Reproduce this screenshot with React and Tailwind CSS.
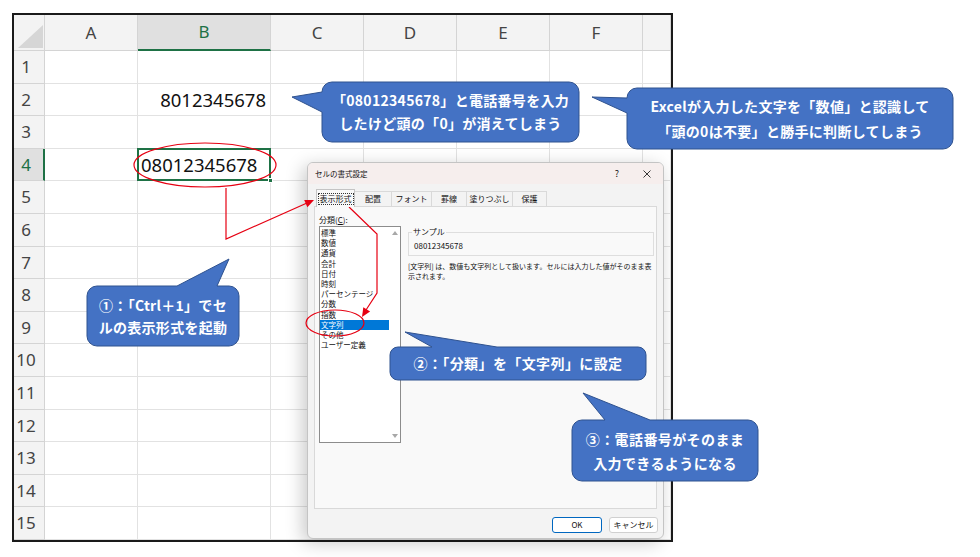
import React from "react";

const columns = ["A", "B", "C", "D", "E", "F", ""];
const rows = Array.from({ length: 15 }, (_, i) => i + 1);

const categories = [
  "標準",
  "数値",
  "通貨",
  "会計",
  "日付",
  "時刻",
  "パーセンテージ",
  "分数",
  "指数",
  "文字列",
  "その他",
  "ユーザー定義",
];

const tabs = [
  { label: "配置", w: "w-[37px]" },
  { label: "フォント", w: "w-[40px]" },
  { label: "罫線", w: "w-[35px]" },
  { label: "塗りつぶし", w: "w-[46px]" },
  { label: "保護", w: "w-[34px]" },
];

// rounded box + pointer tail, one outline
function bubblePath({ x1, y1, x2, y2, r, side, a, b, tx, ty }) {
  let d = `M${x1 + r},${y1}`;
  if (side === "top") d += ` L${a},${y1} L${tx},${ty} L${b},${y1}`;
  d += ` L${x2 - r},${y1} A${r},${r} 0 0 1 ${x2},${y1 + r}`;
  d += ` L${x2},${y2 - r} A${r},${r} 0 0 1 ${x2 - r},${y2}`;
  d += ` L${x1 + r},${y2} A${r},${r} 0 0 1 ${x1},${y2 - r}`;
  if (side === "left") d += ` L${x1},${b} L${tx},${ty} L${x1},${a}`;
  d += ` L${x1},${y1 + r} A${r},${r} 0 0 1 ${x1 + r},${y1} Z`;
  return d;
}

const bubbles = [
  { x1: 322, y1: 82, x2: 579, y2: 142, r: 10, side: "left", a: 92, b: 112, tx: 292, ty: 97 },
  { x1: 627, y1: 88, x2: 953, y2: 149, r: 10, side: "left", a: 98, b: 113, tx: 592, ty: 97 },
  { x1: 87, y1: 286, x2: 239, y2: 346, r: 10, side: "top", a: 177, b: 217, tx: 229, ty: 259 },
  { x1: 390, y1: 347, x2: 646, y2: 380, r: 8, side: "top", a: 432, b: 497, tx: 405, ty: 332 },
  { x1: 572, y1: 420, x2: 758, y2: 481, r: 10, side: "top", a: 605, b: 650, tx: 583, ty: 393 },
];

function Sheet() {
  return (
    <div className="pl-[12px] pt-[13px]">
      <div className="grid h-[529px] w-[661px] grid-cols-[31px_93px_133px_93px_93px_93px_93px_1fr] grid-rows-[36px_repeat(15,minmax(0,1fr))] border-2 border-[#1a1a1a] bg-white">
        <div className="relative border-r border-b border-[#d4d4d4] bg-[#f3f3f3]">
          <svg className="absolute left-0 top-0" width="31" height="36">
            <polygon points="4,33 29,33 29,10" fill="#d6d6d6" />
          </svg>
        </div>
        {columns.map((c, i) =>
          c === "B" ? (
            <div key={i} className="flex items-center justify-center border-r border-b-2 border-r-[#d4d4d4] border-b-[#1e7145] bg-[#e0e0e0] text-[17px] text-[#1e7145]">
              {c}
            </div>
          ) : (
            <div key={i} className="flex items-center justify-center border-r border-b border-[#d4d4d4] bg-[#f3f3f3] text-[17px] text-[#444]">
              {c}
            </div>
          )
        )}
        {rows.map((r) => (
          <React.Fragment key={r}>
            {r === 4 ? (
              <div className="flex items-center justify-center border-r-2 border-b border-r-[#1e7145] border-b-[#d4d4d4] bg-[#e0e0e0] pr-[5px] text-[17px] text-[#1e7145]">
                {r}
              </div>
            ) : (
              <div className="flex items-center justify-center border-r border-b border-[#d4d4d4] bg-[#f3f3f3] pr-[6px] text-[17px] text-[#444]">
                {r}
              </div>
            )}
            {columns.map((c, i) => {
              if (r === 2 && c === "B") {
                return (
                  <div key={i} className="flex items-center justify-end border-r border-b border-[#e2e2e2] pr-[4px] text-[18.5px] text-[#111]">
                    8012345678
                  </div>
                );
              }
              if (r === 4 && c === "B") {
                return (
                  <div key={i} className="relative flex items-center border-r border-b border-[#e2e2e2] pl-[3px] text-[18.5px] text-[#111]">
                    08012345678
                    <div className="absolute -left-px -top-px -right-px -bottom-px border-2 border-[#1e7145]" />
                    <div className="absolute -right-[3px] -bottom-[3px] h-[5px] w-[5px] border border-white bg-[#1e7145]" />
                  </div>
                );
              }
              return <div key={i} className="border-r border-b border-[#e2e2e2]" />;
            })}
          </React.Fragment>
        ))}
      </div>
    </div>
  );
}

function FormatDialog() {
  return (
    <div className="absolute left-[307px] top-[162px] flex h-[377px] w-[357px] flex-col overflow-hidden rounded-[6px] border border-[#c4c4c4] bg-[#f3f3f3] font-['Noto_Sans_CJK_JP',sans-serif] text-[#111] shadow-[-4px_4px_18px_rgba(0,0,0,0.22)]">
      <div className="flex h-[21px] items-center bg-[#f6eeed] pl-[7px] pr-[12px] text-[7.5px]">
        <span>セルの書式設定</span>
        <div className="ml-auto flex items-center gap-[24px]">
          <span className="text-[9px]">?</span>
          <svg width="8" height="8" viewBox="0 0 8 8">
            <path d="M0.5 0.5 L7.5 7.5 M7.5 0.5 L0.5 7.5" stroke="#222" strokeWidth="0.9" />
          </svg>
        </div>
      </div>

      <div className="mt-[5px] flex h-[17px] items-end pl-[8px] text-[8px]">
        <div className="relative z-10 -mb-px flex h-[18px] w-[39px] items-center justify-center border border-b-0 border-[#c4c4c4] bg-[#f9f9f9]">
          <span className="px-[1px] leading-[10px] outline outline-1 outline-dotted outline-[#333]">表示形式</span>
        </div>
        {tabs.map((t) => (
          <div key={t.label} className={`flex h-[15px] items-center justify-center border-t border-r border-[#d9d9d9] bg-[#f3f3f3] ${t.w}`}>
            {t.label}
          </div>
        ))}
      </div>

      <div className="mx-[6px] flex h-[303px] gap-[7px] border border-[#d9d9d9] bg-[#f9f9f9] pl-[4px]">
        <div className="w-[82px]">
          <div className="mt-[7px] text-[8px] leading-[12px]">
            分類(<span className="underline">C</span>):
          </div>
          <div className="flex h-[217px] border border-[#8c8c8c] bg-white">
            <div className="flex-1 pt-[1px] text-[7.5px]">
              {categories.map((c) =>
                c === "文字列" ? (
                  <div key={c} className="h-[10.2px] bg-[#0078d7] pl-[1px] leading-[10.2px] text-white">
                    {c}
                  </div>
                ) : (
                  <div key={c} className="h-[10.2px] pl-[1px] leading-[10.2px]">
                    {c}
                  </div>
                )
              )}
            </div>
            <div className="flex w-[11px] flex-col items-center justify-between py-[4px]">
              <svg width="6" height="4" viewBox="0 0 6 4">
                <polygon points="3,0 6,4 0,4" fill="#a8a8a8" />
              </svg>
              <svg width="6" height="4" viewBox="0 0 6 4">
                <polygon points="0,0 6,0 3,4" fill="#a8a8a8" />
              </svg>
            </div>
          </div>
        </div>

        <div className="w-[246px]">
          <fieldset className="mt-[20px] border border-[#dedede] px-[5px]">
            <legend className="-ml-[2px] px-[1px] text-[8px] leading-[10px]">サンプル</legend>
            <div className="text-[8px] leading-[18px]">08012345678</div>
          </fieldset>
          <div className="mt-[5px] whitespace-nowrap text-[7px] leading-[10px]">
            [文字列] は、数値も文字列として扱います。セルには入力した値がそのまま表
            <br />
            示されます。
          </div>
        </div>
      </div>

      <div className="mt-[8px] flex justify-end gap-[7px] pr-[5px] text-[8px]">
        <button className="flex h-[16px] w-[50px] items-center justify-center rounded-[3px] border border-[#0067c0] bg-white">
          OK
        </button>
        <button className="flex h-[16px] w-[49px] items-center justify-center rounded-[3px] border border-[#d0d0d0] bg-white">
          キャンセル
        </button>
      </div>
    </div>
  );
}

function RedMarks() {
  return (
    <svg className="pointer-events-none absolute left-0 top-0" width="980" height="557">
      <ellipse cx="205" cy="165" rx="71" ry="22" fill="none" stroke="#e60012" strokeWidth="1.2" />
      <ellipse cx="335" cy="323" rx="29" ry="13" fill="none" stroke="#e60012" strokeWidth="1.2" />
      <polyline points="226,188 226,239 307,203" fill="none" stroke="#e60012" strokeWidth="1.2" />
      <polygon points="314,200 307.4,207.3 304.2,200" fill="#e60012" />
      <polyline points="349,207 377,234 377,293 366,310" fill="none" stroke="#e60012" strokeWidth="1.2" />
      <polygon points="362,317 370.1,311.4 363.3,307.2" fill="#e60012" />
    </svg>
  );
}

function Callouts() {
  return (
    <>
      <svg className="pointer-events-none absolute left-0 top-0" width="980" height="557">
        {bubbles.map((b, i) => (
          <path key={i} d={bubblePath(b)} fill="#4472c4" stroke="#2f528f" strokeWidth="1" />
        ))}
      </svg>
      <div className="absolute left-[322px] top-[82px] flex h-[60px] w-[257px] flex-col items-center justify-center text-[14px] leading-[23px] tracking-[0.3px]">
        <span>「08012345678」と電話番号を入力</span>
        <span>したけど頭の「0」が消えてしまう</span>
      </div>
      <div className="absolute left-[627px] top-[88px] flex h-[61px] w-[326px] flex-col items-center justify-center text-[14px] leading-[25px] tracking-[0.3px]">
        <span>Excelが入力した文字を「数値」と認識して</span>
        <span>「頭の0は不要」と勝手に判断してしまう</span>
      </div>
      <div className="absolute left-[87px] top-[286px] flex h-[60px] w-[152px] flex-col items-center justify-center text-[14px] leading-[22px] tracking-[0.3px]">
        <span>①：「Ctrl＋1」でセ</span>
        <span>ルの表示形式を起動</span>
      </div>
      <div className="absolute left-[390px] top-[347px] flex h-[33px] w-[256px] items-center justify-center text-[14px] tracking-[0.4px]">
        <span>②：「分類」を「文字列」に設定</span>
      </div>
      <div className="absolute left-[572px] top-[420px] flex h-[61px] w-[186px] flex-col items-center justify-center text-[14px] leading-[24px] tracking-[0.4px]">
        <span>③：電話番号がそのまま</span>
        <span>入力できるようになる</span>
      </div>
    </>
  );
}

export default function App() {
  return (
    <div className="relative h-[557px] w-[980px] overflow-hidden bg-white font-['Noto_Sans','Noto_Sans_CJK_JP',sans-serif]">
      <Sheet />
      <FormatDialog />
      <RedMarks />
      <div className="whitespace-nowrap font-['Noto_Sans_CJK_JP',sans-serif] font-bold text-white">
        <Callouts />
      </div>
    </div>
  );
}
